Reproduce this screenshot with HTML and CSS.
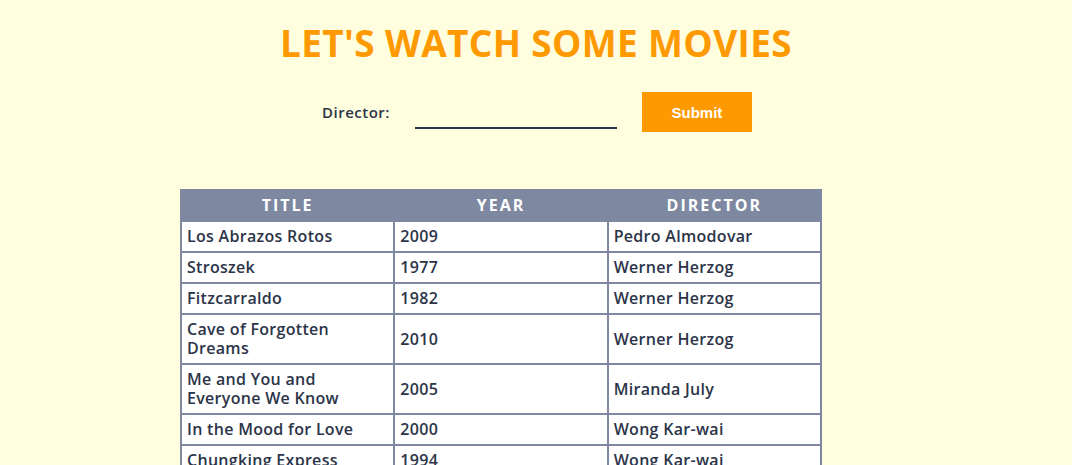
FILE: index.html
```html
<!DOCTYPE html>
<html>
<head>
<meta charset="utf-8">
<link rel="stylesheet" href="styles.css">
</head>
<body>
<h1 class="title">LET'S WATCH SOME MOVIES</h1>
<form class="search">
  <label class="search-label" for="director">Director:</label>
  <input class="search-input" id="director" type="text">
  <button class="search-btn" type="button">Submit</button>
</form>
<table class="movies">
  <thead>
    <tr><th>Title</th><th>Year</th><th>Director</th></tr>
  </thead>
  <tbody>
    <tr><td>Los Abrazos Rotos</td><td>2009</td><td>Pedro Almodovar</td></tr>
    <tr><td>Stroszek</td><td>1977</td><td>Werner Herzog</td></tr>
    <tr><td>Fitzcarraldo</td><td>1982</td><td>Werner Herzog</td></tr>
    <tr><td>Cave of Forgotten Dreams</td><td>2010</td><td>Werner Herzog</td></tr>
    <tr><td>Me and You and Everyone We Know</td><td>2005</td><td>Miranda July</td></tr>
    <tr><td>In the Mood for Love</td><td>2000</td><td>Wong Kar-wai</td></tr>
    <tr><td>Chungking Express</td><td>1994</td><td>Wong Kar-wai</td></tr>
  </tbody>
</table>
</body>
</html>
```
FILE: styles.css
```css
html, body {
  margin: 0;
  padding: 0;
  background: #ffffe0;
  font-family: "Open Sans", "Noto Sans", sans-serif;
  color: #2c3448;
}
.title {
  margin: 21px 0 0;
  text-align: center;
  font-size: 37px;
  line-height: 44px;
  font-weight: 700;
  color: #ff9900;
  letter-spacing: 0.35px;
}
.search {
  display: flex;
  justify-content: center;
  align-items: center;
  margin-top: 27px;
  gap: 25px;
  padding-left: 2px;
}
.search-label {
  font-size: 15px;
  font-weight: 600;
  letter-spacing: 0.5px;
  color: #2c3448;
}
.search-input {
  width: 202px;
  height: 30px;
  border: none;
  border-bottom: 2px solid #2c3448;
  background: transparent;
  margin-top: 2px;
  padding: 0;
  outline: none;
}
.search-btn {
  width: 110px;
  height: 40px;
  border: none;
  background: #ff9900;
  color: #fff;
  font-family: "Liberation Sans", Arial, sans-serif;
  font-weight: 700;
  font-size: 15px;
}
.movies {
  margin: 57px 0 0 180px;
  border-collapse: collapse;
  width: 642px;
  table-layout: fixed;
  background: #fff;
}
.movies th {
  background: #7e88a1;
  color: #fff;
  font-size: 16px;
  font-weight: 700;
  text-transform: uppercase;
  letter-spacing: 2px;
  height: 27px;
  line-height: 18px;
  padding: 0 0 2px;
  border: 2px solid #7e88a1;
}
.movies td {
  border: 2px solid #7e88a1;
  font-size: 16px;
  font-weight: 600;
  letter-spacing: 0.3px;
  line-height: 19px;
  padding: 5px 5px 5px 5px;
  color: #2c3448;
}
```
